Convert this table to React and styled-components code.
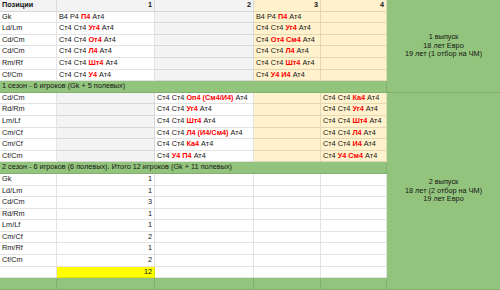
import React from 'react'
import styled, { createGlobalStyle } from 'styled-components'

const GlobalStyle = createGlobalStyle`
  html, body {
    margin: 0;
    padding: 0;
    background: #fff;
  }
  body {
    font-family: "Liberation Sans", Arial, sans-serif;
  }
`

const fills = {
  white: '#ffffff',
  gray: '#f3f3f3',
  cream: '#fff2cc',
  green: '#93c47d',
  yellow: '#ffff00',
}

const Sheet = styled.div`
  display: grid;
  grid-template-columns: 57px 98px 99px 67px 66px 113px;
  grid-template-rows: repeat(25, 11.6px);
  width: 500px;
  height: 290px;
  overflow: hidden;
  font-size: 7.3px;
  color: #151515;
`

const Cell = styled.div`
  box-sizing: border-box;
  background: ${p => fills[p.$bg || 'white']};
  border-right: 1px solid rgba(0, 0, 0, 0.11);
  border-bottom: 1px solid rgba(0, 0, 0, 0.11);
  padding: 0 2px;
  line-height: 10.6px;
  white-space: nowrap;
  overflow: hidden;
  text-align: ${p => (p.$right ? 'right' : 'left')};
  font-weight: ${p => (p.$bold ? 700 : 400)};
  grid-column: ${p => (p.$span ? `span ${p.$span}` : 'auto')};
`

const Note = styled.div`
  box-sizing: border-box;
  grid-column: 6;
  grid-row: ${p => p.$rows};
  background: ${fills.green};
  border-bottom: 1px solid rgba(0, 0, 0, 0.11);
  display: flex;
  align-items: center;
  justify-content: center;
  text-align: center;
  line-height: 8.4px;
`

const Hot = styled.b`
  color: #ff0000;
  font-weight: 700;
`

// "*...*" marks the red part of a line
function Line({ text }) {
  if (!text) return null
  return text.split('*').map((part, i) =>
    i % 2 ? <Hot key={i}>{part}</Hot> : <React.Fragment key={i}>{part}</React.Fragment>
  )
}

const seasonOne = [
  ['Gk', 'В4 Р4 *П4* Ат4', 'В4 Р4 *П4* Ат4'],
  ['Ld/Lm', 'Ст4 Ст4 *Уг4* Ат4', 'Ст4 Ст4 *Уг4* Ат4'],
  ['Cd/Cm', 'Ст4 Ст4 *От4* Ат4', 'Ст4 *От4 См4* Ат4'],
  ['Cd/Cm', 'Ст4 Ст4 *Л4* Ат4', 'Ст4 Ст4 *Л4* Ат4'],
  ['Rm/Rf', 'Ст4 Ст4 *Шт4* Ат4', 'Ст4 Ст4 *Шт4* Ат4'],
  ['Cf/Cm', 'Ст4 Ст4 *У4* Ат4', 'Ст4 *У4 И4* Ат4'],
]

const seasonTwo = [
  ['Cd/Cm', 'Ст4 Ст4 *Оп4 (См4/И4)* Ат4', 'Ст4 Ст4 *Ка4* Ат4'],
  ['Rd/Rm', 'Ст4 Ст4 *Уг4* Ат4', 'Ст4 Ст4 *Уг4* Ат4'],
  ['Lm/Lf', 'Ст4 Ст4 *Шт4* Ат4', 'Ст4 Ст4 *Шт4* Ат4'],
  ['Cm/Cf', 'Ст4 Ст4 *Л4 (И4/См4)* Ат4', 'Ст4 Ст4 *Л4* Ат4'],
  ['Cm/Cf', 'Ст4 Ст4 *Ка4* Ат4', 'Ст4 Ст4 *И4* Ат4'],
  ['Cf/Cm', 'Ст4 *У4 П4* Ат4', 'Ст4 *У4 См4* Ат4'],
]

const totals = [
  ['Gk', 1],
  ['Ld/Lm', 1],
  ['Cd/Cm', 3],
  ['Rd/Rm', 1],
  ['Lm/Lf', 1],
  ['Cm/Cf', 2],
  ['Rm/Rf', 1],
  ['Cf/Cm', 2],
]

export default function App() {
  return (
    <>
      <GlobalStyle />
      <Sheet>
        <Cell $bg="gray" $bold>Позиции</Cell>
        <Cell $bg="gray" $bold $right>1</Cell>
        <Cell $bg="gray" $bold $right>2</Cell>
        <Cell $bg="cream" $bold $right>3</Cell>
        <Cell $bg="cream" $bold $right>4</Cell>
        <Note $rows="1 / span 8">
          1 выпуск<br />18 лет Евро<br />19 лет (1 отбор на ЧМ)
        </Note>

        {seasonOne.map(([pos, a, b], i) => (
          <React.Fragment key={'s1' + i}>
            <Cell>{pos}</Cell>
            <Cell><Line text={a} /></Cell>
            <Cell $bg="gray" />
            <Cell $bg="cream"><Line text={b} /></Cell>
            <Cell $bg="cream" />
          </React.Fragment>
        ))}

        <Cell $bg="green" $span={5}>1 сезон - 6 игроков (Gk + 5 полевых)</Cell>
        <Note $rows="9 / span 17">
          2 выпуск<br />18 лет (2 отбор на ЧМ)<br />19 лет Евро
        </Note>

        {seasonTwo.map(([pos, a, b], i) => (
          <React.Fragment key={'s2' + i}>
            <Cell>{pos}</Cell>
            <Cell $bg="gray" />
            <Cell><Line text={a} /></Cell>
            <Cell $bg="cream" />
            <Cell $bg="cream"><Line text={b} /></Cell>
          </React.Fragment>
        ))}

        <Cell $bg="green" $span={5}>
          2 сезон - 6 игроков (6 полевых). Итого 12 игроков (Gk + 11 полевых)
        </Cell>

        {totals.map(([pos, n], i) => (
          <React.Fragment key={'t' + i}>
            <Cell>{pos}</Cell>
            <Cell $right>{n}</Cell>
            <Cell />
            <Cell />
            <Cell />
          </React.Fragment>
        ))}

        <Cell />
        <Cell $bg="yellow" $right>12</Cell>
        <Cell />
        <Cell />
        <Cell />

        <Cell $bg="green" />
        <Cell $bg="green" />
        <Cell $bg="green" />
        <Cell $bg="green" />
        <Cell $bg="green" />
      </Sheet>
    </>
  )
}
